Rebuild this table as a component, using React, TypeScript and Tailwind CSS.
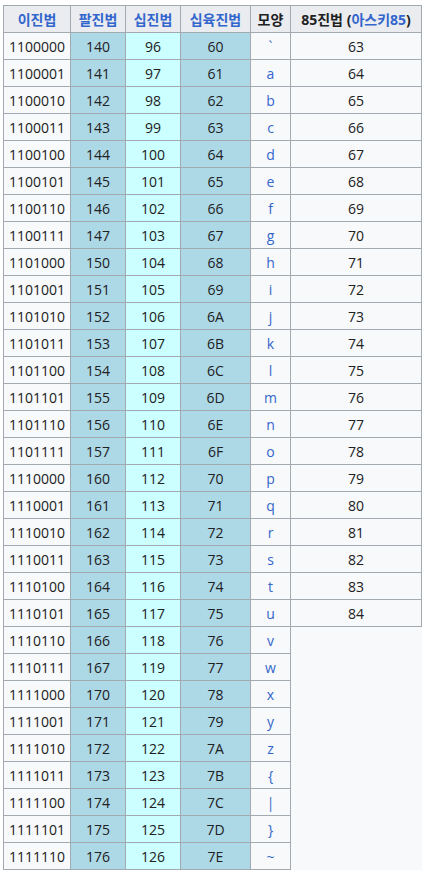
import React from "react";

const rows = Array.from({ length: 31 }, (_, i) => {
  const n = 96 + i;
  return {
    bin: n.toString(2),
    oct: n.toString(8),
    dec: String(n),
    hex: n.toString(16).toUpperCase(),
    ch: String.fromCharCode(n),
    a85: n <= 117 ? String(n - 33) : null,
  };
});

const cell = "border border-[#a2a9b1] p-0 text-center align-middle";

export default function App() {
  return (
    <div
      className="min-h-screen bg-white pl-[3px] pt-[5px] text-[14px] text-[#202122]"
      style={{ fontFamily: '"Open Sans", "Noto Sans CJK KR", sans-serif' }}
    >
      <table className="w-[419px] table-fixed border-collapse bg-[#f8f9fa]">
        <colgroup>
          <col className="w-[67px]" />
          <col className="w-[55px]" />
          <col className="w-[55px]" />
          <col className="w-[70px]" />
          <col className="w-[40px]" />
          <col />
        </colgroup>
        <thead>
          <tr className="h-[27px] bg-[#eaecf0] font-bold">
            <th className={`${cell} text-[#3366cc]`}>이진법</th>
            <th className={`${cell} text-[#3366cc]`}>팔진법</th>
            <th className={`${cell} text-[#3366cc]`}>십진법</th>
            <th className={`${cell} text-[#3366cc]`}>십육진법</th>
            <th className={cell}>모양</th>
            <th className={cell}>
              85진법 (<span className="text-[#3366cc]">아스키85</span>)
            </th>
          </tr>
        </thead>
        <tbody>
          {rows.map((r) => (
            <tr key={r.bin} className="h-[27px]">
              <td className={cell}>{r.bin}</td>
              <td className={`${cell} bg-[#add8e6]`}>{r.oct}</td>
              <td className={`${cell} bg-[#ccffff]`}>{r.dec}</td>
              <td className={`${cell} bg-[#add8e6]`}>{r.hex}</td>
              <td className={`${cell} text-[#3366cc]`}>{r.ch}</td>
              {r.a85 !== null && <td className={cell}>{r.a85}</td>}
            </tr>
          ))}
        </tbody>
      </table>
    </div>
  );
}
